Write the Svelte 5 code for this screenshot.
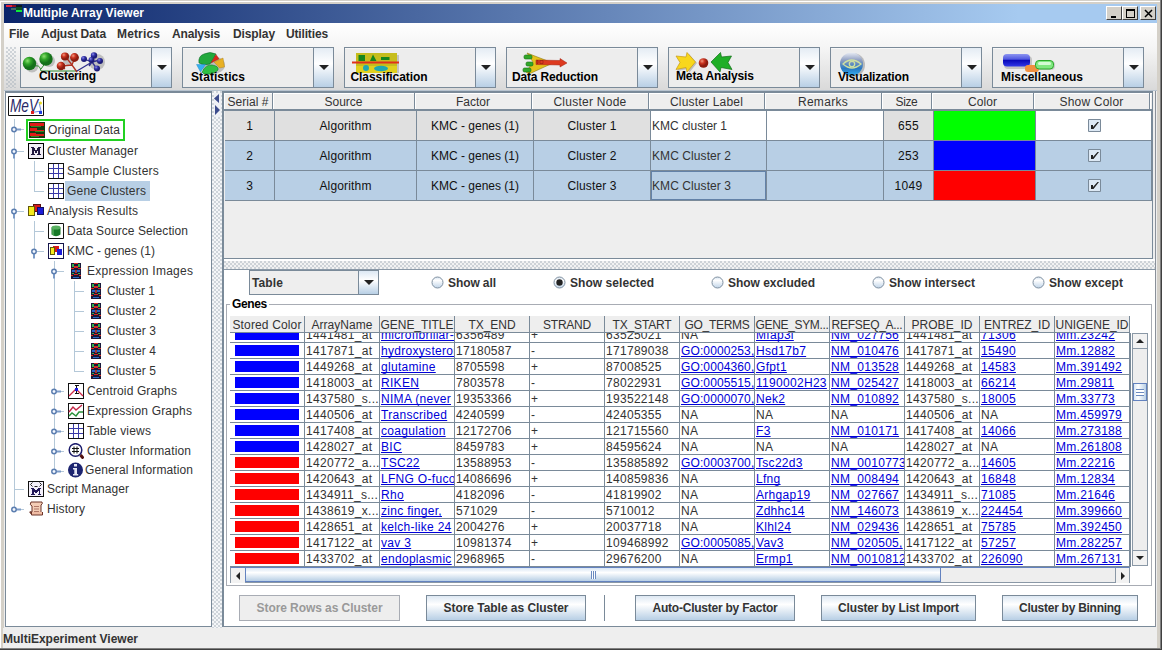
<script>
  // Spreads the letters of a label so that it takes the given width.
  function fit(node, width) {
    const range = document.createRange();
    range.selectNodeContents(node);
    const natural = range.getBoundingClientRect().width;
    const count = node.textContent.length;
    if (count > 1) node.style.letterSpacing = (width - natural) / (count - 0.5) + 'px';
  }

  const menus = [
    ['File', 20, 12], ['Adjust Data', 65, 11], ['Metrics', 43, 12],
    ['Analysis', 48, 13], ['Display', 42, 11], ['Utilities', 42, 0]
  ];

  const tools = [
    { name: 'Clustering', x: 20, tx: 39, ty: 80, w: 57 },
    { name: 'Statistics', x: 182, tx: 191, ty: 81, w: 54 },
    { name: 'Classification', x: 344, tx: 350.5, ty: 81, w: 77 },
    { name: 'Data Reduction', x: 506, tx: 512, ty: 81, w: 86 },
    { name: 'Meta Analysis', x: 668, tx: 676, ty: 80, w: 78 },
    { name: 'Visualization', x: 830, tx: 838, ty: 81, w: 71 },
    { name: 'Miscellaneous', x: 992, tx: 1001, ty: 81, w: 82 }
  ];

  // g: one letter per guide column. v line through, t branch, l last branch, space nothing
  // h: handle, c closed, o open
  const tree = [
    { t: 'Original Data', w: 72, g: 't', h: 'c', i: 'heat', hl: true, ht: 22 },
    { t: 'Cluster Manager', w: 91, g: 't', h: 'o', i: 'm' },
    { t: 'Sample Clusters', w: 92, g: 'vt', i: 'grid' },
    { t: 'Gene Clusters', w: 79, g: 'vl', i: 'grid', sel: true },
    { t: 'Analysis Results', w: 91, g: 't', h: 'o', i: 'folders' },
    { t: 'Data Source Selection', w: 121, g: 'vt', i: 'data' },
    { t: 'KMC - genes (1)', w: 88, g: 'vl', h: 'o', i: 'kmc' },
    { t: 'Expression Images', w: 106, g: 'v t', h: 'o', i: 'expr' },
    { t: 'Cluster 1', w: 48, g: 'v vt', i: 'expr' },
    { t: 'Cluster 2', w: 49, g: 'v vt', i: 'expr' },
    { t: 'Cluster 3', w: 49, g: 'v vt', i: 'expr' },
    { t: 'Cluster 4', w: 49, g: 'v vt', i: 'expr' },
    { t: 'Cluster 5', w: 49, g: 'v vl', i: 'expr' },
    { t: 'Centroid Graphs', w: 90, g: 'v t', h: 'c', i: 'centroid' },
    { t: 'Expression Graphs', w: 105, g: 'v t', h: 'c', i: 'graph' },
    { t: 'Table views', w: 64, g: 'v t', h: 'c', i: 'grid' },
    { t: 'Cluster Information', w: 104, g: 'v t', h: 'c', i: 'lens' },
    { t: 'General Information', w: 108, g: 'v l', h: 'c', i: 'info', ht: 18 },
    { t: 'Script Manager', w: 82, g: 't', i: 'script', ht: 20 },
    { t: 'History', w: 38, g: 'l', h: 'c', i: 'scroll' }
  ];

  const clusterHeads = [
    ['Serial #', 41], ['Source', 38], ['Factor', 34], ['Cluster Node', 73], ['Cluster Label', 73],
    ['Remarks', 50], ['Size', 22], ['Color', 29], ['Show Color', 64]
  ];
  const clusters = [
    { n: 1, label: 'KMC cluster 1', lw: 75, size: '655', c: '#00ff00' },
    { n: 2, label: 'KMC Cluster 2', lw: 79, size: '253', c: '#0000ff', sel: true },
    { n: 3, label: 'KMC Cluster 3', lw: 79, size: '1049', c: '#ff0000', sel: true, focus: true }
  ];

  const radios = [
    ['Show all', 48, 122], ['Show selected', 84, 158], ['Show excluded', 87, 161],
    ['Show intersect', 86, 160], ['Show except', 74, 90]
  ];

  const geneHeads = [
    ['Stored Color', 69], ['ArrayName', 61], ['GENE_TITLE', 73], ['TX_END', 47], ['STRAND', 48], ['TX_START', 59],
    ['GO_TERMS', 65], ['GENE_SYM...', 73], ['REFSEQ_A...', 71], ['PROBE_ID', 61], ['ENTREZ_ID', 66], ['UNIGENE_ID', 73]
  ];
  const B = '#0000ff', R = '#ff0000';
  const genes = [
    [B, '1441481_at', 'microfibrillar-', '6356489', '+', '63525021', 'NA', 'Mfap3l', 'NM_027756', '71306', 'Mm.23242'],
    [B, '1417871_at', 'hydroxysteroid', '17180587', '-', '171789038', 'GO:0000253,', 'Hsd17b7', 'NM_010476', '15490', 'Mm.12882'],
    [B, '1449268_at', 'glutamine', '8705598', '+', '87008525', 'GO:0004360,', 'Gfpt1', 'NM_013528', '14583', 'Mm.391492'],
    [B, '1418003_at', 'RIKEN', '7803578', '-', '78022931', 'GO:0005515,', '1190002H23', 'NM_025427', '66214', 'Mm.29811'],
    [B, '1437580_s...', 'NIMA (never', '19353366', '+', '193522148', 'GO:0000070,', 'Nek2', 'NM_010892', '18005', 'Mm.33773'],
    [B, '1440506_at', 'Transcribed', '4240599', '-', '42405355', 'NA', 'NA', 'NA', 'NA', 'Mm.459979'],
    [B, '1417408_at', 'coagulation', '12172706', '+', '121715560', 'NA', 'F3', 'NM_010171', '14066', 'Mm.273188'],
    [B, '1428027_at', 'BIC', '8459783', '+', '84595624', 'NA', 'NA', 'NA', 'NA', 'Mm.261808'],
    [R, '1420772_a...', 'TSC22', '13588953', '-', '135885892', 'GO:0003700,', 'Tsc22d3', 'NM_0010773', '14605', 'Mm.22216'],
    [R, '1420643_at', 'LFNG O-fucos', '14086696', '+', '140859836', 'NA', 'Lfng', 'NM_008494', '16848', 'Mm.12834'],
    [R, '1434911_s...', 'Rho', '4182096', '-', '41819902', 'NA', 'Arhgap19', 'NM_027667', '71085', 'Mm.21646'],
    [R, '1438619_x...', 'zinc finger,', '571029', '-', '5710012', 'NA', 'Zdhhc14', 'NM_146073', '224454', 'Mm.399660'],
    [R, '1428651_at', 'kelch-like 24', '2004276', '+', '20037718', 'NA', 'Klhl24', 'NM_029436', '75785', 'Mm.392450'],
    [R, '1417122_at', 'vav 3', '10981374', '+', '109468992', 'GO:0005085,', 'Vav3', 'NM_020505,', '57257', 'Mm.282257'],
    [R, '1433702_at', 'endoplasmic', '2968965', '-', '29676200', 'NA', 'Ermp1', 'NM_0010812', '226090', 'Mm.267131']
  ];
  const cellsOf = (r) => [
    [r[1]], [r[2], 1], [r[3]], [r[4]], [r[5]], [r[6], 1], [r[7], 1], [r[8], 1], [r[1]], [r[9], 1], [r[10], 1]
  ].map(([v, link]) => ({ v, link: link && v !== 'NA' }));
</script>

{#snippet down(w)}
  <svg class="tri" width={w} height={w / 2} viewBox="0 0 10 5"><path d="M0 0h10L5 5z" fill="#222" /></svg>
{/snippet}

{#snippet art(name)}
  {#if name === 'Clustering'}
    <g fill="#888" opacity=".45"><circle cx="32" cy="66" r="6.5" /><circle cx="49" cy="61" r="6" /><circle cx="68" cy="60" r="5" /><circle cx="97" cy="62" r="8" /></g>
    <path d="M32 67q8-4 9 4h36M46 62l-5 7" stroke="#2d8c2d" fill="none" />
    <path d="M65 56l7 9 3-8M61 66l11-1 5 7M61 66l4 3" stroke="#b03020" fill="none" stroke-width="1.3" />
    <path d="M84 59l8 3 2-7M92 62l8-2M92 62l5 7M92 62L77 71M89 66l3-4" stroke="#30308c" fill="none" stroke-width="1.3" />
    <g fill="url(#gr)"><circle cx="29.5" cy="63.5" r="6.7" /><circle cx="46" cy="59" r="6.7" /></g>
    <g fill="url(#rd)"><circle cx="65" cy="56.5" r="4.1" /><circle cx="74.5" cy="57.5" r="4.4" /><circle cx="61" cy="66" r="4.3" /></g>
    <g fill="url(#bl)"><circle cx="94" cy="55.5" r="3.2" /><circle cx="84" cy="59" r="3" /><circle cx="100" cy="61" r="3" /><circle cx="97" cy="68.5" r="3" /><circle cx="91.5" cy="60" r="3" /></g>
  {:else if name === 'Statistics'}
    <ellipse cx="213" cy="65" rx="12" ry="9" fill="#777" opacity=".4" />
    <path d="M199 63q-1-7 5-9 6-3 12 0l-6 10q-6 2-11-1z" fill="#22a83c" stroke="#0c6c28" stroke-width=".6" />
    <path d="M216 54.500l3 4.500-8 4z" fill="#dc2818" stroke="#901810" stroke-width=".4" />
    <path d="M214 62l9-4 1.500 9-5 1z" fill="#e8b024" stroke="#a87810" stroke-width=".4" />
    <path d="M202 72q4-8 10-7 7 1 6 5-4 5-14 4z" fill="#30c044" stroke="#0c7c28" stroke-width=".6" />
    <path d="M196.500 64.500h9l-5 7.500z" fill="#35b0f0" stroke="#1880c0" stroke-width=".4" />
  {:else if name === 'Classification'}
    <path d="M358 55h41v18h-41z" fill="#999" opacity=".5" />
    <path d="M356 53h41v20h-41z" fill="#c6bd1d" />
    <path d="M356 66h41v7h-41z" fill="#e0d01e" />
    <path d="M358.500 55h6.500v6h-6.500zM370 61l3-6.500 3.500 6.500zM381 57h8.500v3H381z" fill="#16861c" />
    <path d="M352 62.500h47" stroke="#e0301c" stroke-width="1.800" />
    <circle cx="366" cy="68" r="3" fill="#20a8b0" /><ellipse cx="381" cy="68.500" rx="7" ry="2.800" fill="#20a8b0" />
  {:else if name === 'Data Reduction'}
    <path d="M527 53l26 10-24 11-3-2 7-10z" fill="#e4c21a" stroke="#8c7a10" stroke-width=".6" />
    <path d="M536 60l24 .500v-2l7 4.500-7 4v-2l-24-.500z" fill="#dd3a20" stroke="#a02010" stroke-width=".5" />
    <g fill="#32a828" stroke="#146c14" stroke-width=".6"><rect x="524" y="55" width="8" height="4" rx="1.500" /><rect x="526" y="62" width="7" height="4" rx="1.500" /><rect x="523" y="68" width="8" height="4" rx="1.500" /></g>
    <path d="M537 60.500h1v3h-1zM540 60.500h3v3h-3z" stroke="#902010" fill="none" stroke-width=".6" />
  {:else if name === 'Meta Analysis'}
    <path d="M678 57l10 1 1-4 8 9-8 10-1-4-11 2 4-7z" fill="#777" opacity=".4" />
    <path d="M676 56l10 1 1-4.500L695.500 62l-8.500 10-1-4.500-10 2 4-7z" fill="#f8d71c" stroke="#c99a14" stroke-width=".7" />
    <circle cx="703.500" cy="63" r="4.800" fill="url(#rd)" />
    <path d="M731.500 56l-10 1-1-4.500L711 62l9 10 1-4.500 11 2-4-7z" fill="#1fae26" stroke="#107016" stroke-width=".7" />
  {:else if name === 'Visualization'}
    <circle cx="853" cy="65" r="12" fill="#888" opacity=".5" />
    <circle cx="851.500" cy="64" r="11.500" fill="url(#eye)" />
    <path d="M843 64q8.500-8 18 0-9 8-18 0z" fill="none" stroke="#cfe0a0" stroke-width="1.300" />
    <circle cx="852" cy="64" r="2.700" fill="none" stroke="#cfe0a0" stroke-width="1.300" />
  {:else}
    <rect x="1004" y="56" width="28" height="13" rx="4" fill="#999" opacity=".5" />
    <rect x="1003" y="54" width="27" height="12.500" rx="4" fill="url(#pill)" />
    <rect x="1036" y="61" width="19" height="9" rx="4" fill="#999" opacity=".4" />
    <rect x="1025" y="65" width="14" height="7" rx="3" fill="#f09040" />
    <rect x="1035.500" y="60.500" width="18" height="8.500" rx="3.500" fill="#80e880" stroke="#2aa82a" />
    <rect x="1038" y="62" width="13" height="3" rx="1.500" fill="#d4fbd4" />
  {/if}
{/snippet}

{#snippet icon(kind)}
  <svg class="icon" width="16" height="16" viewBox="0 0 16 16" shape-rendering={kind === 'lens' || kind === 'info' || kind === 'scroll' || kind === 'data' ? 'auto' : 'crispEdges'}>
    {#if kind === 'heat'}
      <path d="M0 0h16v16H0z" fill="#143a10" /><path d="M1 1h14v3H1zM1 6h7v2h7v1H1zM1 11h6v1h8v2H1z" fill="#e01818" /><path d="M2 4h10v1H2zM6 9h9v1H6zM2 14h8v1H2z" fill="#2e8a20" />
    {:else if kind === 'm'}
      <path d="M.5.5h15v15H.5z" fill="#f2eef6" stroke="#000" /><path d="M3 4h3l2 4 2-4h3v1h-1v6h1v1H9v-1h1V7l-1.500 3h-1L6 7v4h1v1H3v-1h1V5H3z" fill="#221840" />
    {:else if kind === 'grid'}
      <path d="M.5.5h15v15H.5z" fill="#fff" stroke="#111" /><path d="M5.500 1v14M10.500 1v14M1 5.500h14M1 10.500h14" stroke="#3a3aa8" fill="none" />
    {:else if kind === 'folders'}
      <path d="M5 1.500h7v7H5z" fill="#d81818" stroke="#601010" /><path d="M9 4.500h6.500v7H9z" fill="#1c1cd8" stroke="#101060" /><path d="M.5 3.500h6v9h-6z" fill="#f6ea1c" stroke="#605808" />
    {:else if kind === 'kmc'}
      <path d="M.5.5h15v15H.5z" fill="#fff" stroke="#15154a" /><path d="M5 3h6v6H5z" fill="#d81818" /><path d="M9 6h5v6H9z" fill="#1c1cd8" /><path d="M2.500 4.500h4v7h-4z" fill="#f6ea1c" stroke="#605808" />
    {:else if kind === 'data'}
      <path d="M.5.5h15v15H.5z" fill="#fff" stroke="#111" /><path d="M3.500 4.500v7q4.500 3.500 9 0v-7z" fill="#187a28" /><ellipse cx="8" cy="4.500" rx="4.500" ry="2" fill="#58b060" /><path d="M5 6v6" stroke="#6cc470" />
    {:else if kind === 'expr'}
      <path d="M3 0h10v16H3z" fill="#18183a" /><path d="M4 1h2v3H4zM10 1h2v3h-2zM4 10h2v1H4zM10 10h2v1h-2z" fill="#38b048" /><path d="M6 3h4v2H6zM3 5h3v1H3zM10 5h3v1h-3zM6 11h4v1H6zM3 12h2v1H3zM11 12h2v1h-2zM6 0h4v1H6z" fill="#d82c20" /><path d="M4 7h3v2H4zM9 7h3v2H9zM5 14h6v1H5z" fill="#2868c8" /><path d="M7 7h2v3H7z" fill="#a03838" />
    {:else if kind === 'centroid'}
      <path d="M.5.5h15v15H.5z" fill="#fff" stroke="#111" /><path d="M1 13l7-7 7 7" fill="none" stroke="#d02848" shape-rendering="auto" stroke-width="1.300" /><path d="M8.500 2v9M6.500 2.500h4M6.500 10.500h4" stroke="#111" fill="none" /><path d="M7 5h3v3H7z" fill="#1a1ae0" />
    {:else if kind === 'graph'}
      <path d="M.5.5h15v15H.5z" fill="#fff" stroke="#111" /><path d="M1 9l4-5 3 3 6-5" fill="none" stroke="#c42848" stroke-width="1.400" shape-rendering="auto" /><path d="M1 13l3-3 4 3 3-4h4" fill="none" stroke="#289038" stroke-width="1.400" shape-rendering="auto" />
    {:else if kind === 'lens'}
      <circle cx="7.500" cy="7" r="6.300" fill="#fff" stroke="#1c1c6c" stroke-width="1.500" /><path d="M6 3.500v7M9 3.500v7M4 5.500h7M4 8.500h7" stroke="#111" /><path d="M12.500 12l3 3.500" stroke="#501010" stroke-width="3" />
    {:else if kind === 'info'}
      <circle cx="7.500" cy="8" r="7.500" fill="#1c2470" /><path d="M6 2h3v2.500H6zM5 6h4v6h1.200v1.500H5V12h1.300V7.500H5z" fill="#e4e6f4" />
    {:else if kind === 'script'}
      <path d="M.5.5h15v15H.5z" fill="#f4f0fa" stroke="#111" /><path d="M4.500 1.500L2.500 3.500l2 2M11.500 1.500l2 2-2 2M6.500 5.500h3" stroke="#222" fill="none" shape-rendering="auto" /><path d="M3 7h3l2 3 2-3h3v1h-1v5h1v1H9.500v-1h1v-3L8.500 12h-1L5.500 10v3h1v1H3v-1h1V8H3z" fill="#221858" />
    {:else if kind === 'scroll'}
      <path d="M3 1h11q1 2-1 3v9H4q-2 0-2-2h2V5Q1 4 3 1z" fill="#f4cdb6" stroke="#6c3428" /><path d="M6 5.500h5M6 8h5M6 10.500h5" stroke="#b07868" /><path d="M1.500 11h2v3h11v-3" fill="#f0bca4" stroke="#6c3428" />
    {/if}
  </svg>
{/snippet}

<div class="window">
  <header class="titlebar">
    <svg width="17" height="11" viewBox="0 0 17 11" shape-rendering="crispEdges"><path d="M0 1h6v2H0z" fill="#e8203c" /><path d="M6 1h4v2H6z" fill="#8c1020" /><path d="M10 1h6v2h-6z" fill="#101820" /><path d="M5 4h5v2H5z" fill="#446a64" /><path d="M10 6h6v2h-6z" fill="#10e838" /><path d="M10 3h6v3h-6z" fill="#0a5020" /></svg>
    <h1><span use:fit={121}>Multiple Array Viewer</span></h1>
    <div class="wbtns">
      <button aria-label="Minimize"><svg width="9" height="9"><path d="M1 7h5v2H1z" /></svg></button>
      <button aria-label="Maximize"><svg width="9" height="9" shape-rendering="crispEdges"><path d="M0 0h9v9H0zM1 2v6h7V2z" fill-rule="evenodd" /></svg></button>
      <button class="close" aria-label="Close"><svg width="9" height="9"><path d="M1 1l7 7M8 1l-7 7" stroke="#000" stroke-width="1.500" /></svg></button>
    </div>
  </header>

  <div class="chrome">
    <nav class="menu">
      {#each menus as [name, w, gap]}<span style:width="{w + gap}px"><b use:fit={w}>{name}</b></span>{/each}
    </nav>
    <div class="toolbar">
      <i class="grip"></i>
      {#each tools as tool}
        <div class="tool">
          <svg width="130" height="39" viewBox="{tool.x + 1} 48 130 39">
            <defs>
              <radialGradient id="gr" cx=".35" cy=".3"><stop offset="0" stop-color="#8ce070" /><stop offset=".5" stop-color="#30a428" /><stop offset="1" stop-color="#14701a" /></radialGradient>
              <radialGradient id="rd" cx=".35" cy=".3"><stop offset="0" stop-color="#f09880" /><stop offset=".5" stop-color="#cc3420" /><stop offset="1" stop-color="#8c1c10" /></radialGradient>
              <radialGradient id="bl" cx=".35" cy=".3"><stop offset="0" stop-color="#9090e8" /><stop offset=".5" stop-color="#3838b0" /><stop offset="1" stop-color="#1c1c78" /></radialGradient>
              <linearGradient id="eye" x2="0" y2="1"><stop offset="0" stop-color="#e8ecf4" /><stop offset=".35" stop-color="#8c9cc0" /><stop offset=".7" stop-color="#2878c0" /><stop offset="1" stop-color="#38b0f4" /></linearGradient>
              <linearGradient id="pill" x2="0" y2="1"><stop offset="0" stop-color="#8c94f0" /><stop offset=".42" stop-color="#5058e0" /><stop offset=".5" stop-color="#0808b8" /><stop offset="1" stop-color="#3038e8" /></linearGradient>
            </defs>
            {@render art(tool.name)}
            <text x={tool.tx} y={tool.ty} textLength={tool.w}>{tool.name}</text>
          </svg>
          <i class="drop">{@render down(10)}</i>
        </div>
      {/each}
    </div>
  </div>

  <main>
    <aside>
      <svg class="logo" width="36" height="20" viewBox="0 0 36 20">
        <path d="M.5.5h35v19H.5z" fill="#fff" stroke="#111" />
        <text x="2" y="15.500" textLength="28" lengthAdjust="spacingAndGlyphs">MeV</text>
        <path d="M31 6l2 9-9 1.500" fill="none" stroke="#6c88e0" /><circle cx="32.500" cy="7" r="1.500" fill="#e8d820" /><path d="M23 15h3v3h-3z" fill="#e02020" /><path d="M31 15h3v3h-3z" fill="#2040e0" />
      </svg>
      {#each tree as n}
        {@const d = n.g.length - 1}
        {@const h = n.ht ?? 20}
        <div class="node" style:height="{h}px">
          <svg class="guides" width={21 + 20 * d} height={h}>
            {#each n.g.split('') as g, k}
              {#if g !== ' '}<path d="M{8.5 + 20 * k} 0V{g === 'l' ? 10.5 : h}{g !== 'v' ? `M${8.5 + 20 * k} 10.500h9` : ''}" stroke="#b4c8d8" fill="none" shape-rendering="crispEdges" />{/if}
            {/each}
            {#if n.h}
              <g transform="translate({8 + 20 * d} 10.5)">
                <path d={n.h === 'c' ? 'M2 0h5' : 'M0 2v5'} stroke="#7d9cc8" stroke-width="2" /><circle r="2.200" fill="#f4f8ff" stroke="#5c7eb0" stroke-width="1.500" />
              </g>
            {/if}
          </svg>
          <span class="entry" class:hl={n.hl}>{@render icon(n.i)}<span class="label" class:sel={n.sel} class:near={n.i === 'info'}><span use:fit={n.w}>{n.t}</span></span></span>
        </div>
      {/each}
    </aside>

    <div class="vsplit"><svg width="7" height="24"><path d="M5 1v9L0 5.500zM1 12l5 5-5 5z" fill="#3c4c8c" /></svg></div>

    <section class="right">
      <div class="top">
        <div class="chead crow">
          {#each clusterHeads as [name, w]}<span><em use:fit={w}>{name}</em></span>{/each}
          <span></span>
        </div>
        <div class="cbody">
          {#each clusters as c}
            <div class="crow" class:picked={c.sel}>
              <span>{c.n}</span><span><em use:fit={52}>Algorithm</em></span><span><em use:fit={88}>KMC - genes (1)</em></span><span><em use:fit={49}>Cluster {c.n}</em></span>
              <span class="edit" class:focus={c.focus}><em use:fit={c.lw}>{c.label}</em></span><span class="edit"></span>
              <span class="size">{c.size}</span><span class="swatch" style:background={c.c}></span>
              <span class="edit mid"><svg width="13" height="13" viewBox="0 0 13 13"><path d="M.5.5h12v12H.5z" fill="#dce8f4" stroke="#7a8a99" /><path d="M3 6h2v2l4.500-5H11L5.500 10H3z" fill="#222" /></svg></span>
            </div>
          {/each}
        </div>
      </div>
      <div class="hsplit"></div>

      <div class="bottom">
        <div class="filters">
          <div class="combo"><b use:fit={31}>Table</b><i>{@render down(10)}</i></div>
          {#each radios as [name, w, step], i}
            <label style:width="{step}px">
              <svg width="13" height="13" viewBox="0 0 13 13"><circle cx="6.500" cy="6.500" r="5.500" fill="url(#radio)" stroke="#8090a0" /><defs><linearGradient id="radio" x2="0" y2="1"><stop offset="0" stop-color="#d4e2f0" /><stop offset=".3" stop-color="#fff" /><stop offset="1" stop-color="#c0d4e8" /></linearGradient></defs>{#if i === 1}<circle cx="6.500" cy="6.500" r="3.200" fill="#222" />{/if}</svg>
              <b use:fit={w}>{name}</b>
            </label>
          {/each}
        </div>

        <fieldset>
          <legend><span use:fit={35}>Genes</span></legend>
          <div class="ghead grow">
            {#each geneHeads as [name, w]}<span><em use:fit={w}>{name}</em></span>{/each}
          </div>
          <div class="scroller">
            <div class="gview">
              {#each genes as r}
                <div class="grow">
                  <span class="bar"><i style:background={r[0]}></i></span>
                  {#each cellsOf(r) as cell}<span class:long={/^GO/.test(cell.v)}>{#if cell.link}<u>{cell.v}</u>{:else}{cell.v}{/if}</span>{/each}
                </div>
              {/each}
            </div>
            <div class="vbar">
              <i><svg width="8" height="4"><path d="M0 4h8L4 0z" fill="#222" /></svg></i>
              <div class="track"><div class="vthumb"></div></div>
              <i><svg width="8" height="4"><path d="M0 0h8L4 4z" fill="#222" /></svg></i>
            </div>
          </div>
          <div class="hbar">
            <i><svg width="4" height="8"><path d="M4 0v8L0 4z" fill="#222" /></svg></i>
            <div class="hthumb"><s></s></div>
            <i><svg width="4" height="8"><path d="M0 0v8l4-4z" fill="#222" /></svg></i>
          </div>
        </fieldset>

        <div class="actions">
          <button disabled style:width="161px"><b use:fit={126}>Store Rows as Cluster</b></button>
          <button style:width="160px"><b use:fit={125}>Store Table as Cluster</b></button>
          <i></i>
          <button style:width="160px"><b use:fit={125}>Auto-Cluster by Factor</b></button>
          <button style:width="155px"><b use:fit={121}>Cluster by List Import</b></button>
          <button style:width="136px"><b use:fit={102}>Cluster by Binning</b></button>
        </div>
      </div>
    </section>
  </main>
  <footer><b use:fit={135}>MultiExperiment Viewer</b></footer>
</div>

<style>
  :global(body) { background: #fff; }
  * { box-sizing: border-box; }
  .window {
    --dots: radial-gradient(circle at 1px 1px, #a8b2bc 0 .5px, transparent .9px) 0 0/4px 4px, radial-gradient(circle at 3px 3px, #a8b2bc 0 .5px, transparent .9px) 0 0/4px 4px;
    width: 1162px; height: 650px; padding: 4px 5px 2px 4px; overflow: hidden;
    display: flex; flex-direction: column;
    font: 12px/14px "Liberation Sans", Arial, sans-serif; color: #333; white-space: nowrap;
    background: #d4d0c8; box-shadow: inset -1px -1px #404040, inset -2px -2px #808080, inset 0 1px #d4d0c8, inset 1px 2px #fff;
  }
  svg { display: block; flex: none; }
  em { font-style: normal; }
  i { font-style: normal; display: block; }
  .titlebar { height: 19px; flex: none; display: flex; align-items: flex-start; background: linear-gradient(90deg, #0a246a, #a6caf0 88%, #a6caf0); padding-left: 2px; }
  h1 { margin: 2px 0 0; font-size: 12px; line-height: 14px; color: #fff; flex: 1; }
  .wbtns { display: flex; padding: 2px 1px 0 0; }
  .wbtns button { width: 16px; height: 14px; padding: 2px 3px; border: 1px solid; border-color: #fff #404040 #404040 #fff; background: #d4d0c8; }
  .wbtns .close { margin-left: 2px; }

  .chrome { height: 68px; flex: none; background: linear-gradient(#fff, #f4f4f4 40%, #d9d9d9); display: flex; flex-direction: column; border-bottom: 1px solid #b8c4d0; }
  .menu { height: 24px; display: flex; padding: 4px 0 0 5px; }
  .toolbar { display: flex; gap: 10px; padding-left: 2px; }
  .grip { width: 10px; height: 41px; margin-right: -6px; background: var(--dots); }
  .tool { width: 152px; height: 41px; border: 1px solid #7a8a99; background: #ededed; display: flex; box-shadow: inset 0 1px #f8f8f8; }
  .tool text { font: bold 12px "Liberation Sans", Arial, sans-serif; fill: #000; }
  .drop { width: 20px; border-left: 1px solid #7a8a99; background: linear-gradient(#e4ecf4, #fff 40%, #b8cfe5); display: flex; align-items: center; justify-content: center; }

  main { flex: 1; min-height: 0; display: flex; background: #eee; }
  aside { width: 207px; margin-left: 1px; border: 1px solid #7a8a99; border-top-width: 2px; background: #fff; flex: none; margin-bottom: 1px; }
  .logo { margin: 3px 0 3px 2px; }
  .logo text { font: italic 18px "Liberation Sans", Arial, sans-serif; fill: #282868; }
  .node { display: flex; align-items: center; }
  .entry { display: flex; align-items: center; height: 20px; }
  .icon { margin-left: 1px; }
  .label { padding: 3px 0 3px 3px; height: 20px; display: block; }
  .near { padding-left: 1px; }
  .sel { background: #b8cfe5; margin-left: 1px; padding: 3px 4px 3px 2px; }
  .hl { border: 2px solid #22d022; height: 22px; margin-left: -1px; padding-right: 3px; }
  .vsplit { width: 10px; flex: none; padding: 2px 0 0 2px; background: var(--dots), #f4f6f8; }
  .vsplit svg { background: #eef0f4; }

  .right { flex: 1; min-width: 0; border-left: 2px solid #7a8a99; display: flex; flex-direction: column; border-right: 1px solid #8a9099; border-bottom: 1px solid #7a8a99; margin: 0 1px 1px 0; }
  .top { height: 168px; border-top: 2px solid #7a8a99; border-bottom: 1px solid #7a8a99; border-right: 1px solid #7a8a99; margin-right: 2px; flex: none; }
  .crow { display: grid; grid-template-columns: 50px 142px 117px 117px 116px 117px 50px 102px 1fr; height: 30px; color: #111; background: #b8cfe5; }
  .crow:not(.picked):not(.chead) { background: #e0e0e0; }
  .crow > span { border-right: 1px solid #7a8a99; border-bottom: 1px solid #7a8a99; display: flex; align-items: center; justify-content: center; min-width: 0; }
  .crow.chead { height: 18px; grid-template-columns: 49px 142px 117px 117px 116px 117px 50px 102px 116px 1fr; color: #333; background: #eee; border-bottom: 2px solid #7a8a99; }
  .crow.chead > span { border-bottom: 0; box-shadow: inset 1px 1px #fff; padding-top: 1px; }
  .chead > span:last-child { border: 0; }
  .cbody { padding-left: 1px; }
  .crow > .edit { justify-content: flex-start; padding-left: 1px; color: #333; }
  .crow:not(.picked) > .edit { background: #fff; }
  .crow > .mid { justify-content: center; }
  .crow > .focus { box-shadow: inset 0 0 0 1px #6382a8; }
  .size { letter-spacing: .33px; }
  .hsplit { height: 11px; flex: none; border-bottom: 1px solid #8a98a6; background: var(--dots), #f2f2f2; border-top: 2px solid #fff; }

  .bottom { flex: 1; background: #fff; padding-left: 2px; min-height: 0; }
  .filters { display: flex; padding-left: 23px; height: 27px; }
  .combo { width: 130px; height: 25px; border: 1px solid #7a8a99; background: #eee; display: flex; align-items: center; padding-left: 2px; margin-right: 53px; flex: none; }
  .combo b { flex: 1; }
  .combo i { width: 20px; align-self: stretch; border-left: 1px solid #7a8a99; background: linear-gradient(#dce8f4, #fff 40%, #b8cfe5); display: flex; align-items: center; justify-content: center; }
  label { display: flex; align-items: center; gap: 3px; height: 25px; flex: none; margin-left: -1px; margin-right: 1px; }
  label b { padding-left: 1px; }
  fieldset { margin: 0; padding: 0 0 0 3px; width: 926px; height: 289px; border: 1px solid #a8acb4; }
  legend { color: #000; font-weight: bold; line-height: 14px; padding: 0 2px; margin-left: 0; }
  .grow { display: grid; grid-template-columns: repeat(12, 75px); height: 16px; flex: none; }
  .grow > span { border-right: 1px solid #7a8a99; border-bottom: 1px solid #7a8a99; padding: 1px 0 0 1px; overflow: hidden; line-height: 15px; letter-spacing: .3px; }
  .grow > .long { letter-spacing: .12px; }
  .grow.ghead { margin-top: 5px; height: 17px; background: #eee; width: 900px; }
  .ghead > span { text-align: center; padding: 2px 0 0; letter-spacing: 0; }
  u { color: #0000d8; text-underline-offset: 1px; text-decoration-thickness: 1px; text-decoration-skip-ink: none; }
  .scroller { display: flex; height: 234px; }
  .gview { width: 901px; overflow: hidden; display: flex; flex-direction: column; justify-content: flex-end; border-right: 1px solid #7a8a99; }
  .grow > .bar { padding: 2px 5px 2px 5px; }
  .bar i { height: 11px; width: 64px; }
  .vbar { width: 16px; height: 233px; margin-left: 1px; border: 1px solid #8a98a6; background: #eee; display: flex; flex-direction: column; }
  .vbar > i, .hbar > i { display: flex; align-items: center; justify-content: center; width: 14px; height: 15px; flex: none; background: #f2f2f2; }
  .vbar > i:first-child { border-bottom: 1px solid #8a98a6; }
  .vbar > i:last-child { border-top: 1px solid #8a98a6; }
  .track { flex: 1; padding-top: 34px; }
  .vthumb { height: 18px; border: 1px solid #6382bf; background: repeating-linear-gradient(#6a8ac0 0 1px, #fff 1px 3px) 2px 5px/8px 7px no-repeat, linear-gradient(90deg, #d8e6f4, #fff 35%, #b8cfe5); }
  .hbar { width: 900px; height: 16px; border: 1px solid #8a98a6; background: #eee; display: flex; border-top: 1px solid #6382bf; }
  .hthumb { width: 696px; border: solid #6382bf; border-width: 0 1px 1px; background: linear-gradient(#d8e6f4, #fff 35%, #b8cfe5); display: flex; align-items: center; justify-content: center; }
  .hthumb s { width: 5px; height: 8px; background: repeating-linear-gradient(90deg, #6a8ac0 0 1px, #fff 1px 2px); }
  .hbar > i:last-child { margin-left: auto; border-left: 1px solid #8a98a6; }

  .actions { display: flex; padding: 9px 0 0 13px; }
  .actions button { height: 26px; padding: 0; margin-right: 26px; flex: none; border: 1px solid #7a8a99; background: linear-gradient(#dde8f3, #fff 35%, #b8cfe5); font: inherit; color: #333; }
  .actions button:nth-child(2) { margin-right: 18px; }
  .actions button:last-child { margin-right: 0; }
  .actions button:disabled { background: #eee; color: #999; border-color: #a8acb4; }
  .actions > i { width: 1px; height: 26px; background: #7a8a99; margin-right: 30px; flex: none; }
  footer { height: 20px; flex: none; background: #eee; padding: 4px 0 0; margin-left: -1px; }
</style>
